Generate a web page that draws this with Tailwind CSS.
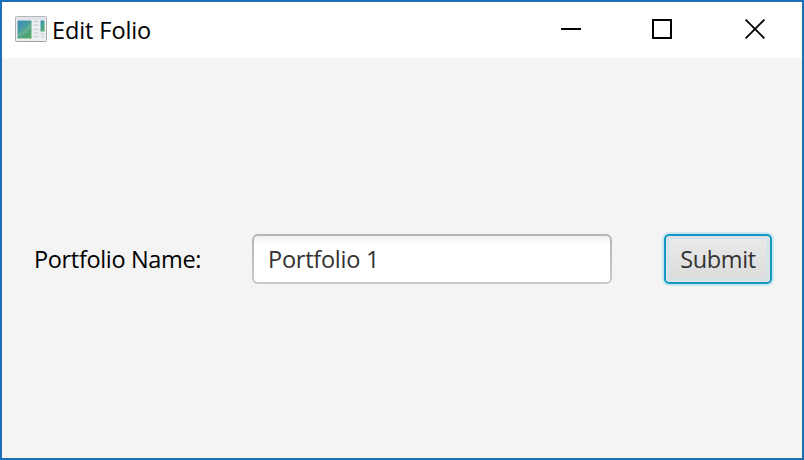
<!DOCTYPE html>
<html lang="en">
<head>
<meta charset="utf-8">
<title>Edit Folio</title>
<script src="https://cdn.jsdelivr.net/npm/@tailwindcss/browser@4"></script>
</head>
<body class="h-screen overflow-hidden font-['Open_Sans','Noto_Sans',sans-serif]">
<div class="flex h-[460px] w-[804px] flex-col border-2 border-[#1b70b5] bg-[#f4f4f4]">
  <header class="flex h-14 shrink-0 items-center bg-white pl-[13px] text-black">
    <svg class="mb-[2px] h-[26px] w-8 shrink-0" viewBox="0 0 32 26">
      <defs>
        <linearGradient id="pic" x1="0" y1="0" x2=".7" y2="1"><stop offset="0" stop-color="#3f86bd"/><stop offset=".5" stop-color="#4aa09b"/><stop offset="1" stop-color="#55a866"/></linearGradient>
        <linearGradient id="frame" x1="0" y1="0" x2="0" y2="1"><stop offset="0" stop-color="#b3b6ba"/><stop offset="1" stop-color="#a2a5a8"/></linearGradient>
      </defs>
      <rect x=".5" y=".5" width="31" height="25" rx="1" fill="#eceeef" stroke="url(#frame)"/>
      <path d="M1 1.500h30v2H1z" fill="#dde1e5"/>
      <path d="M2.500 4.500h14v18h-14z" fill="url(#pic)"/>
      <path d="M2.500 18q7-3 14-12v5q-5 8-14 10z" fill="#8bc39a" opacity=".35"/>
      <path d="M18.500 5.500h5M18.500 9h5M18.500 13.500h5M18.500 17h5M18.500 20.500h5M26 18h3.500M26 21h3.500" stroke="#c3c7cb"/>
      <path d="M25.500 4.500h4v11h-4z" fill="url(#pic)"/>
    </svg>
    <h1 class="ml-[5px] w-[509px] text-[23.5px] leading-8 tracking-[-0.1px]">Edit Folio</h1>
    <div class="mb-[2px] flex items-center text-black">
      <svg class="mr-[71px] h-5 w-5" viewBox="0 0 20 20"><path d="M0 9h20v2H0z"/></svg>
      <svg class="mr-[73px] h-5 w-5" viewBox="0 0 20 20" fill="none" stroke="currentColor" stroke-width="2"><path d="M1 1h18v18H1z"/></svg>
      <svg class="h-5 w-5" viewBox="0 0 20 20" fill="none" stroke="currentColor" stroke-width="1.8"><path d="M.6.6l18.800 18.800M19.400.6L.6 19.400"/></svg>
    </div>
  </header>
  <main class="flex flex-1 items-center pl-8 pt-[2px] text-[23.5px] leading-8">
    <label for="name" class="w-[218px] shrink-0 whitespace-nowrap tracking-[-0.34px] text-black">Portfolio Name:</label>
    <div class="h-[50px] w-[360px] shrink-0 rounded-[6px] bg-linear-to-b from-[#b5b5b5] to-[#c9c9c9] p-[2px]">
      <input id="name" value="Portfolio 1" class="block h-full w-full rounded-[4px] bg-linear-to-b from-[#f2f2f2] to-white to-[9px] px-[14px] tracking-[-0.25px] text-[#323232] outline-none">
    </div>
    <button class="ml-[52px] h-[50px] w-[108px] shrink-0 rounded-[5px] border-2 border-[#1499c4] bg-linear-to-b from-[#ebebeb] to-[#dadada] tracking-[-0.4px] text-[#333] shadow-[0_0_0_2px_#cbe8f2,inset_0_0_0_2px_#dfe2e4,inset_0_0_0_3px_#cfe4eb]">Submit</button>
  </main>
</div>
</body>
</html>
